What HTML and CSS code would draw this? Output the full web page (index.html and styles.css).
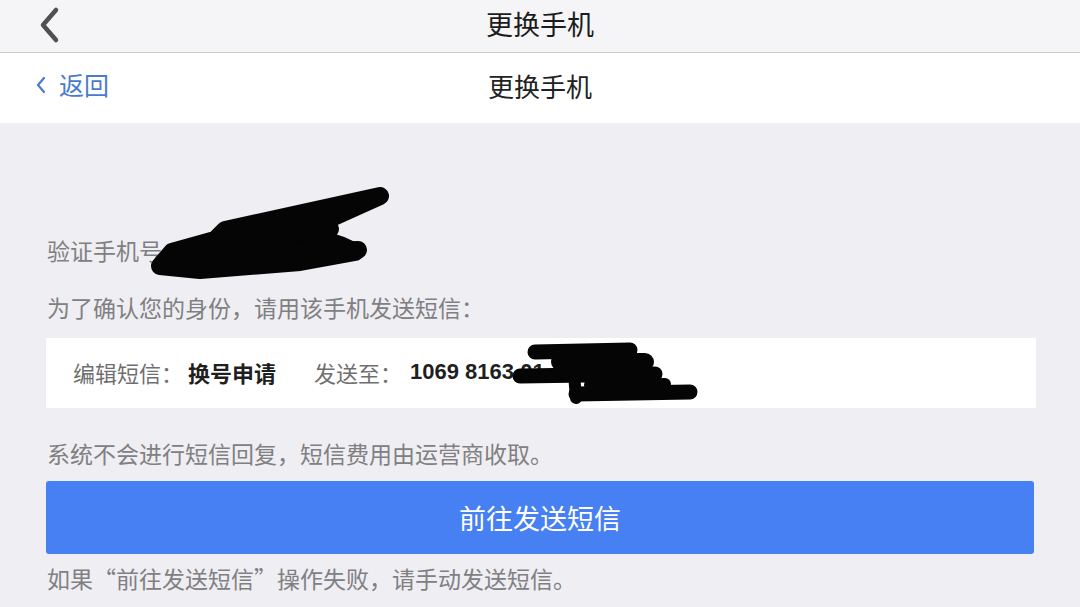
FILE: index.html
```html
<!DOCTYPE html>
<html lang="zh-CN">
<head>
<meta charset="utf-8">
<title>更换手机</title>
<link rel="stylesheet" href="styles.css">
</head>
<body>
<div class="page">
  <header class="topbar">
    <svg class="top-back" width="30" height="40" viewBox="0 0 30 40"><path d="M21 5 L8 20 L21 35" fill="none" stroke="#505052" stroke-width="4.5" stroke-linecap="round" stroke-linejoin="round"/></svg>
    <div class="topbar-title">更换手机</div>
  </header>
  <nav class="navbar">
    <div class="nav-back">
      <svg width="14" height="22" viewBox="0 0 14 22"><path d="M10 4 L4 11 L10 18" fill="none" stroke="#4a7bd0" stroke-width="2.2" stroke-linecap="round" stroke-linejoin="round"/></svg>
      <span class="nav-back-text">返回</span>
    </div>
    <div class="nav-title">更换手机</div>
  </nav>
  <main class="content">
    <p class="line line-first">验证手机号：</p>
    <p class="line line-second">为了确认您的身份，请用该手机发送短信：</p>
    <div class="card">
      <span class="label">编辑短信：</span><span class="value">换号申请</span>
      <span class="label label-gap">发送至：</span><span class="value num">1069 8163 01</span>
    </div>
    <p class="line line-third">系统不会进行短信回复，短信费用由运营商收取。</p>
    <button class="send-btn">前往发送短信</button>
    <p class="line line-last">如果“前往发送短信”操作失败，请手动发送短信。</p>
  </main>
  <svg class="scribble" width="1080" height="607" viewBox="0 0 1080 607">
    <g stroke="#050505" stroke-linecap="round" stroke-linejoin="round" fill="#050505">
      <path d="M225 230 L380 196 L300 232 L340 245 L355 252 L300 262 L200 270 L160 266 L172 252 L215 240 Z" stroke-width="18"/>
      <path d="M222 237 L330 229" stroke-width="18" fill="none"/>
      <path d="M172 258 L358 250" stroke-width="18" fill="none"/>
      <path d="M535 352 L630 350" stroke-width="15" fill="none"/>
      <path d="M520 376 L655 374" stroke-width="15" fill="none"/>
      <path d="M560 362 L645 362" stroke-width="18" fill="none"/>
      <path d="M572 350 L576 398" stroke-width="12" fill="none"/>
      <path d="M576 394 L690 392" stroke-width="15" fill="none"/>
      <path d="M590 385 L665 384" stroke-width="12" fill="none"/>
    </g>
  </svg>
</div>
</body>
</html>
```

FILE: styles.css
```css
* { box-sizing: border-box; }
html, body {
  margin: 0;
  padding: 0;
  width: 1080px;
  height: 607px;
  overflow: hidden;
  font-family: "Noto Sans CJK SC", "Liberation Sans", sans-serif;
  background: #efeef3;
}
.page {
  position: relative;
  width: 1080px;
  height: 607px;
  display: flex;
  flex-direction: column;
}
.topbar {
  height: 53px;
  background: #f5f5f7;
  border-bottom: 1px solid #cbcbcd;
  display: flex;
  align-items: center;
  justify-content: center;
  position: relative;
}
.top-back {
  position: absolute;
  left: 35px;
  top: 5px;
}
.topbar-title {
  font-size: 27px;
  color: #1c1c1c;
  line-height: 1;
  margin-top: -5px;
}
.navbar {
  height: 70px;
  background: #ffffff;
  display: flex;
  align-items: center;
  justify-content: center;
  position: relative;
}
.nav-back {
  position: absolute;
  left: 34px;
  top: 19px;
  display: flex;
  align-items: center;
  gap: 11px;
}
.nav-back-text {
  font-size: 25px;
  color: #4a7bd0;
  line-height: 1;
}
.nav-title {
  font-size: 26px;
  color: #222;
  line-height: 1;
  margin-top: -5px;
}
.content {
  flex: 1;
  padding: 111px 44px 0 46px;
  display: flex;
  flex-direction: column;
}
.line {
  margin: 0;
  font-size: 23px;
  line-height: 32px;
  color: #808082;
  padding-left: 1px;
}
.line-second { margin-top: 25px; }
.card {
  margin-top: 15px;
  height: 70px;
  background: #ffffff;
  display: flex;
  align-items: center;
  padding-left: 27px;
  font-size: 22px;
  padding-bottom: 2px;
}
.label { color: #6f6f71; }
.label-gap { margin-left: 38px; }
.value { color: #1f1f1f; font-weight: 700; margin-left: 5px; }
.num {
  font-family: "Liberation Sans", sans-serif;
  font-size: 22px;
  margin-left: 8px;
}
.line-third { margin-top: 29px; }
.send-btn {
  margin-top: 12px;
  height: 73px;
  border: none;
  border-radius: 3px;
  background: #4680f2;
  color: #ffffff;
  font-family: "Noto Sans CJK SC", sans-serif;
  font-size: 27px;
  width: 988px;
  padding: 0;
}
.line-last { margin-top: 8px; }
.scribble {
  position: absolute;
  left: 0;
  top: 0;
  pointer-events: none;
}
```
